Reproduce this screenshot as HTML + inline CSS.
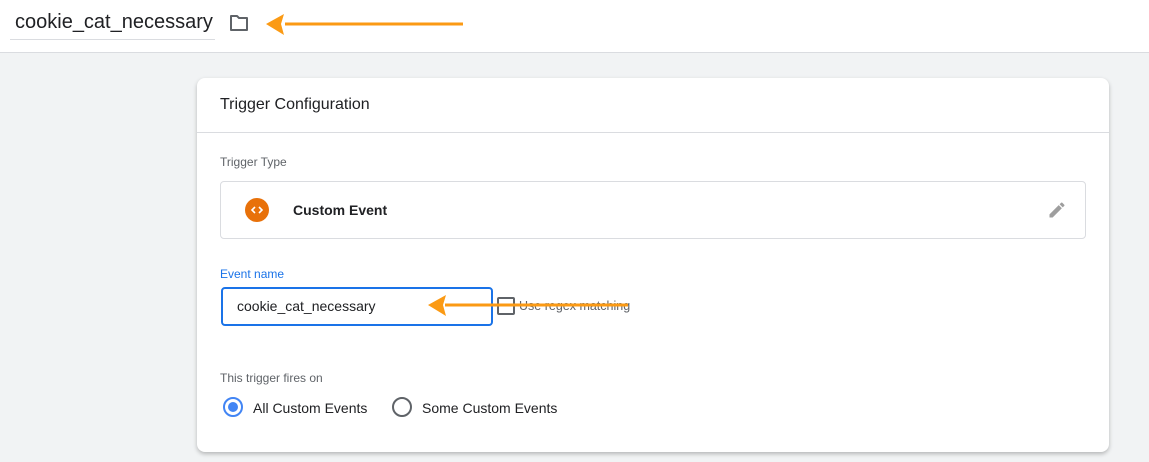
<!DOCTYPE html>
<html><head><meta charset="utf-8"><style>
*{box-sizing:border-box;margin:0;padding:0}
body{width:1149px;height:462px;overflow:hidden;background:#f1f3f4;font-family:"Liberation Sans",Arial,sans-serif;position:relative}
.top{position:absolute;left:0;top:0;width:1149px;height:53px;background:#fff;border-bottom:1px solid #dadce0}
.title{position:absolute;left:10px;top:8px;width:205px;height:32px;border-bottom:1px solid #dadce0;font-size:20px;color:#202124;padding-left:5px;line-height:28px}
.card{position:absolute;left:197px;top:78px;width:912px;height:374px;background:#fff;border-radius:8px;box-shadow:0 2px 4px rgba(0,0,0,.25)}
.hdr{height:55px;border-bottom:1px solid #dadce0;font-size:16px;color:#202124;padding:18px 0 0 23px}
.lbl{position:absolute;font-size:12px;color:#5f6368}
.tt{position:absolute;left:23px;top:103px;width:866px;height:58px;border:1px solid #dadce0;border-radius:4px}
.ic{position:absolute;left:24px;top:16px;width:24px;height:24px;border-radius:50%;background:#e8710a}
.inp{position:absolute;left:24px;top:209px;width:272px;height:39px;border:2px solid #1a73e8;border-radius:4px;font-size:14px;color:#202124;padding:9px 0 0 14px}
.cb{position:absolute;left:300px;top:219px;width:18px;height:18px;border:2px solid #5f6368;border-radius:2px}
.rad{position:absolute;width:20px;height:20px;border-radius:50%;border:2px solid #5f6368}
.t14{position:absolute;font-size:14px;color:#202124}
</style></head><body>
<div class="top"><div class="title">cookie_cat_necessary</div>
<svg style="position:absolute;left:229px;top:14px" width="20" height="18" viewBox="0 0 20 18"><path d="M2 2h6l2 2h8v12H2z" fill="none" stroke="#5f6368" stroke-width="2" stroke-linejoin="round"/></svg>
</div>
<div class="card">
<div class="hdr">Trigger Configuration</div>
<div class="lbl" style="left:23px;top:77px">Trigger Type</div>
<div class="tt"><div class="ic"><svg width="24" height="24" viewBox="0 0 24 24"><path d="M10 9l-3 3 3 3M14 9l3 3-3 3" fill="none" stroke="#fff" stroke-width="1.6"/></svg></div><div class="t14" style="left:72px;top:20px;font-weight:bold">Custom Event</div>
<svg style="position:absolute;left:826px;top:18px" width="20" height="20" viewBox="0 0 24 24"><path d="M3 17.25V21h3.75L17.81 9.94l-3.75-3.75L3 17.25zM20.71 7.04a1 1 0 000-1.41l-2.34-2.34a1 1 0 00-1.41 0l-1.830 1.83 3.75 3.75 1.83-1.83z" fill="#9e9e9e"/></svg></div>
<div class="lbl" style="left:23px;top:189px;color:#1a73e8">Event name</div>
<div class="inp">cookie_cat_necessary</div>
<div class="cb"></div>
<div class="t14" style="left:322px;top:221px;font-size:12.5px;color:#5f6368">Use regex matching</div>
<div class="lbl" style="left:23px;top:293px">This trigger fires on</div>
<div class="rad" style="left:26px;top:319px;border-color:#4285f4"><div style="position:absolute;left:3px;top:3px;width:10px;height:10px;border-radius:50%;background:#4285f4"></div></div>
<div class="t14" style="left:56px;top:322px">All Custom Events</div>
<div class="rad" style="left:195px;top:319px"></div>
<div class="t14" style="left:225px;top:322px">Some Custom Events</div>
</div>
<svg style="position:absolute;left:0;top:0" width="1149" height="462">
<path d="M285 24 L463 24" stroke="#fb9a14" stroke-width="3"/>
<path d="M266 24 L284 14 L281 24 L284 35 Z" fill="#fb9a14"/>
<path d="M445 305 L628 305" stroke="#fb9a14" stroke-width="3"/>
<path d="M428 305 L446 295 L443 305 L446 316 Z" fill="#fb9a14"/>
</svg>
</body></html>
